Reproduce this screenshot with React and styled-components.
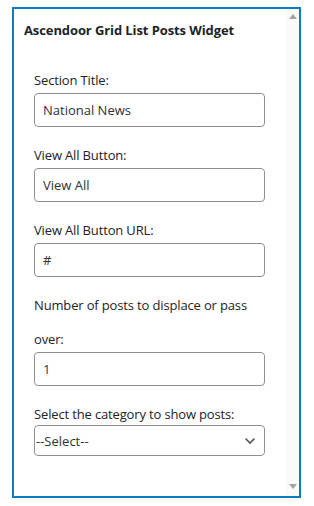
import styled, { createGlobalStyle } from "styled-components";

const fields = [
  { label: "Section Title:", value: "National News" },
  { label: "View All Button:", value: "View All" },
  { label: "View All Button URL:", value: "#" },
  { label: "Number of posts to displace or pass over:", value: "1" },
];

export default function App() {
  return (
    <>
      <GlobalStyle />
      <Panel>
        <Content>
          <Title>Ascendoor Grid List Posts Widget</Title>
          <Form>
            {fields.map((field) => (
              <Field key={field.label}>
                <Label>{field.label}</Label>
                <Input type="text" defaultValue={field.value} />
              </Field>
            ))}
            <Field>
              <Label>Select the category to show posts:</Label>
              <SelectBox>
                <span>--Select--</span>
                <svg width="12" height="8" viewBox="0 0 12 8">
                  <path d="M1.5 1.5 L6 6 L10.5 1.5" fill="none" stroke="#50575e" strokeWidth="1.6" />
                </svg>
              </SelectBox>
            </Field>
          </Form>
        </Content>
        <Scrollbar>
          <Arrow />
          <Arrow down />
        </Scrollbar>
      </Panel>
    </>
  );
}

const GlobalStyle = createGlobalStyle`
  body {
    margin: 0;
    background: #fff;
    font-family: "Open Sans", "Noto Sans", sans-serif;
    font-size: 13px;
    color: #1d2327;
  }
`;

const Panel = styled.div`
  box-sizing: border-box;
  margin: 7px 0 0 12px;
  width: 289px;
  height: 491px;
  border: 2px solid #0a7cc1;
  display: flex;
`;

const Content = styled.div`
  flex: 1;
  padding: 12px 0 0 10px;
`;

const Title = styled.h3`
  margin: 0;
  font-size: 13px;
  line-height: 18px;
  font-weight: 700;
  letter-spacing: -0.1px;
`;

const Form = styled.div`
  padding: 24px 21px 0 10px;
`;

const Field = styled.div`
  display: flex;
  flex-direction: column;
  margin-bottom: 11px;
`;

const Label = styled.label`
  line-height: 34px;
  margin-bottom: -4px;
  letter-spacing: -0.15px;
`;

const Input = styled.input`
  box-sizing: border-box;
  height: 34px;
  width: 100%;
  border: 1px solid #8c8f94;
  border-radius: 4px;
  padding: 0 8px;
  font-family: inherit;
  font-size: 13px;
  color: #2c3338;
  outline: none;
`;

const SelectBox = styled.div`
  box-sizing: border-box;
  height: 31px;
  margin-top: -2px;
  border: 1px solid #8c8f94;
  border-radius: 4px;
  padding: 0 8px 0 1px;
  display: flex;
  align-items: center;
  justify-content: space-between;
  color: #2c3338;
`;

const Scrollbar = styled.div`
  width: 13px;
  background: #fafafa;
  display: flex;
  flex-direction: column;
  justify-content: space-between;
  align-items: center;
  padding: 5px 0 7px;
`;

const Arrow = styled.div`
  width: 0;
  height: 0;
  border-left: 4.5px solid transparent;
  border-right: 4.5px solid transparent;
  ${(props) =>
    props.down
      ? "border-top: 5px solid #a3a3a3;"
      : "border-bottom: 5px solid #a3a3a3;"}
`;
